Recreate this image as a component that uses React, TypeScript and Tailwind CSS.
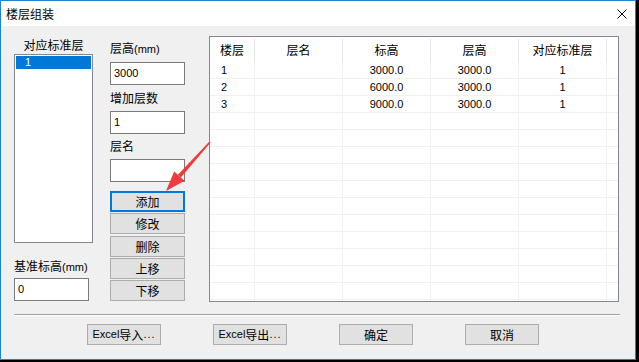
import React from 'react';

const cjk = "font-['Noto_Sans_CJK_SC','Liberation_Sans',sans-serif] text-[12px]";
const num = "font-['Liberation_Sans','Noto_Sans_CJK_SC',sans-serif] text-[11px]";

const rows = [
  { floor: '1', name: '', elev: '3000.0', height: '3000.0', std: '1' },
  { floor: '2', name: '', elev: '6000.0', height: '3000.0', std: '1' },
  { floor: '3', name: '', elev: '9000.0', height: '3000.0', std: '1' },
];

const cols = 'grid grid-cols-[45px_88px_88px_88px_88px_1fr]';

function Label({ text, unit, className = '' }: { text: string; unit?: string; className?: string }) {
  return (
    <div className={`h-[16px] leading-[16px] text-black ${cjk} ${className}`}>
      {text}
      {unit && <span className={num}>{unit}</span>}
    </div>
  );
}

function Input({ value, className = '' }: { value: string; className?: string }) {
  return (
    <div
      className={`h-[23px] border border-[#7a7a7a] bg-white pl-[3px] leading-[21px] text-black ${num} ${className}`}
    >
      {value}
    </div>
  );
}

function Button({
  children,
  focused,
  className = '',
}: {
  children: React.ReactNode;
  focused?: boolean;
  className?: string;
}) {
  return (
    <div
      className={`flex h-[21px] items-center justify-center bg-[#e1e1e1] text-black ${cjk} ${
        focused ? 'border-2 border-[#0078d7]' : 'border border-[#adadad]'
      } ${className}`}
    >
      {children}
    </div>
  );
}

function FloorTable() {
  const empty = Array.from({ length: 12 });
  return (
    <div className="ml-[24px] flex h-[266px] w-[410px] flex-col overflow-hidden border border-[#828790] bg-white">
      <div className={`${cols} h-[25px] shrink-0 ${cjk} text-black`}>
        {['楼层', '层名', '标高', '层高', '对应标准层'].map((h) => (
          <div key={h} className="mt-[2px] flex items-center justify-center border-r border-[#e5e5e5] pb-[2px]">
            {h}
          </div>
        ))}
        <div />
      </div>
      {rows.map((r) => (
        <div key={r.floor} className={`${cols} h-[17px] shrink-0 border-b border-[#f0f0f0] ${num} text-black`}>
          <div className="border-r border-[#f0f0f0] pl-[11px] leading-[16px]">{r.floor}</div>
          <div className="border-r border-[#f0f0f0] text-center leading-[16px]">{r.name}</div>
          <div className="border-r border-[#f0f0f0] text-center leading-[16px]">{r.elev}</div>
          <div className="border-r border-[#f0f0f0] text-center leading-[16px]">{r.height}</div>
          <div className="border-r border-[#f0f0f0] text-center leading-[16px]">{r.std}</div>
          <div />
        </div>
      ))}
      {empty.map((_, i) => (
        <div key={i} className={`${cols} h-[17px] shrink-0 border-b border-[#f0f0f0]`}>
          <div className="border-r border-[#f0f0f0]" />
          <div className="border-r border-[#f0f0f0]" />
          <div className="border-r border-[#f0f0f0]" />
          <div className="border-r border-[#f0f0f0]" />
          <div className="border-r border-[#f0f0f0]" />
          <div />
        </div>
      ))}
    </div>
  );
}

export default function App() {
  return (
    <div className="relative h-[362px] w-[639px] bg-black">
      <div className="flex h-[360px] w-[636px] flex-col border border-[#1883d7] bg-[#f0f0f0]">
        <div className="flex h-[25px] shrink-0 items-center justify-between bg-white pl-[5px] pr-[8px]">
          <span className={`${cjk} text-black`}>楼层组装</span>
          <svg width="10" height="10" viewBox="0 0 10 10">
            <path d="M0.5 0.5 L9.5 9.5 M9.5 0.5 L0.5 9.5" stroke="#000" strokeWidth="1" />
          </svg>
        </div>

        <div className="flex flex-1 flex-col pt-[10px]">
          <div className="flex items-start pl-[13px]">
            {/* left column */}
            <div className="flex h-[265px] w-[79px] flex-col">
              <Label text="对应标准层" className="mt-[1px] text-center" />
              <div className="mt-[1px] h-[189px] border border-[#828790] bg-white p-[1px]">
                <div className={`h-[13px] bg-[#0078d7] pl-[9px] leading-[13px] text-white ${num}`}>1</div>
              </div>
              <Label text="基准标高" unit="(mm)" className="mt-[15px]" />
              <Input value="0" className="mt-[4px] w-[75px]" />
            </div>

            {/* middle column */}
            <div className="ml-[17px] flex w-[75px] flex-col">
              <Label text="层高" unit="(mm)" className="mt-[4px]" />
              <Input value="3000" className="mt-[6px]" />
              <Label text="增加层数" className="mt-[5px]" />
              <Input value="1" className="mt-[5px]" />
              <Label text="层名" className="mt-[4px]" />
              <Input value="" className="mt-[5px]" />
              <Button focused className="mt-[9px]">添加</Button>
              <Button className="mt-[1px]">修改</Button>
              <Button className="mt-[2px]">删除</Button>
              <Button className="mt-[1px]">上移</Button>
              <Button className="mt-[1px]">下移</Button>
            </div>

            <FloorTable />
          </div>

          <div className="ml-[13px] mt-[12px] h-[2px] w-[606px] border-t border-[#a0a0a0] border-b border-b-white" />

          <div className="ml-[86px] mt-[8px] flex gap-[52px]">
            <Button className="w-[74px]">
              <span className={num}>Excel</span>导入<span className={`${num} tracking-[1px]`}>...</span>
            </Button>
            <Button className="w-[74px]">
              <span className={num}>Excel</span>导出<span className={`${num} tracking-[1px]`}>...</span>
            </Button>
            <Button className="w-[74px]">确定</Button>
            <Button className="w-[74px]">取消</Button>
          </div>
        </div>
      </div>

      {/* annotation arrow */}
      <svg className="pointer-events-none absolute left-0 top-0" width="639" height="362">
        <polygon
          points="210.6,142.5 209.4,141.5 177.9,174.8 180.9,177.4"
          fill="#ef3b3b"
        />
        <polygon points="166,191 184.6,180.8 174.2,171.4" fill="#ef3b3b" />
      </svg>
    </div>
  );
}
